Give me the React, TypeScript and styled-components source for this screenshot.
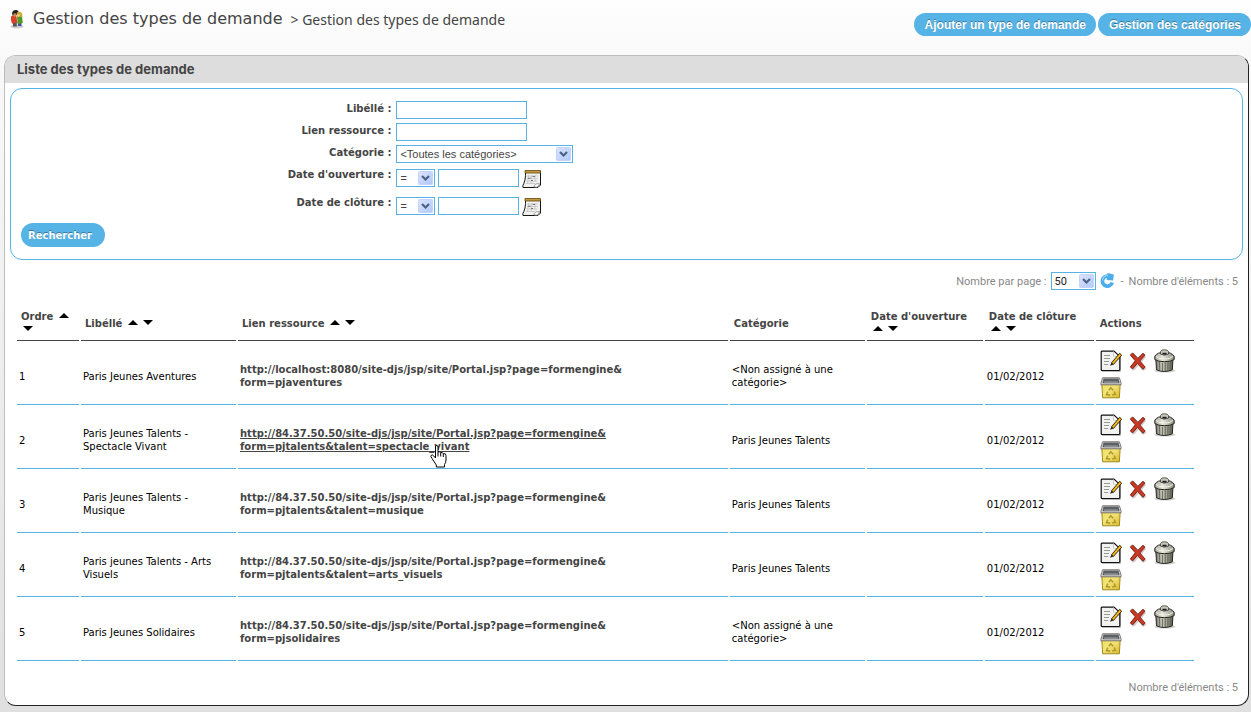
import React from 'react';
import styled, { createGlobalStyle } from 'styled-components';

const BLUE = '#56b3e6';
const INK = '#444';

const GlobalStyle = createGlobalStyle`
  *, *::before, *::after { box-sizing: border-box; }
  body {
    margin: 0;
    min-height: 100vh;
    background: linear-gradient(#fefefe, #f9f9f9 60px, #f0f0f0 300px, #e0e0e0 700px) no-repeat #e0e0e0;
    font-family: "DejaVu Sans", Verdana, sans-serif;
    font-size: 10px;
    line-height: 13px;
    color: #000;
  }
`;

const Page = styled.div`
  padding-left: 4px;
`;

const TopBar = styled.header`
  display: flex;
  justify-content: space-between;
  height: 55px;
`;

const Breadcrumb = styled.div`
  display: flex;
  align-items: center;
  height: 38px;
  padding-left: 4px;
  color: ${INK};
`;

const Title = styled.h1`
  margin: 0 8px 0 7px;
  font-size: 16px;
  line-height: 20px;
  font-weight: 400;
`;

const Crumb = styled.span`
  padding-top: 2px;
  font-family: "Noto Sans", sans-serif;
  font-size: 14px;
  line-height: 20px;
`;

const TopActions = styled.nav`
  display: flex;
  gap: 2px;
  padding-top: 13px;
`;

const PillButton = styled.button`
  height: 23px;
  padding: 1px 10px 0 11px;
  border: 0;
  border-radius: 12px;
  background: ${BLUE};
  color: #fff;
  font: bold 12px/22px "Liberation Sans", Arial, sans-serif;
  text-shadow: 0 -1px 0 rgba(0, 0, 0, 0.35);
  cursor: pointer;
`;

const SearchButton = styled(PillButton)`
  height: 24px;
  padding: 1px 13px 0 7px;
  font: bold 10px/23px "DejaVu Sans", Verdana, sans-serif;
`;

const Panel = styled.main`
  margin: 0 2px 5px 0;
  border: 1px solid;
  border-color: #bdbdbd #222 #222 #bdbdbd;
  border-radius: 12px;
  background: #fff;
  overflow: hidden;
`;

const PanelTitle = styled.h2`
  margin: 0;
  padding-left: 12px;
  background: #ddd;
  color: ${INK};
  font: bold 13px/27px Inter, "Liberation Sans", sans-serif;
`;

const SearchForm = styled.form`
  margin: 5px;
  padding: 12px 10px;
  border: 1px solid ${BLUE};
  border-radius: 12px;
`;

const Field = styled.div<{ $tall?: boolean }>`
  display: grid;
  grid-template-columns: 31% 1fr;
  height: ${(p) => (p.$tall ? 28 : 22)}px;
`;

const FieldLabel = styled.label`
  padding: 1px 5px 0 0;
  text-align: right;
  font-weight: bold;
  line-height: 14px;
  color: ${INK};
`;

const Controls = styled.div<{ $lowered?: boolean }>`
  display: flex;
  align-items: flex-start;
  gap: 3px;
  padding-top: ${(p) => (p.$lowered ? 2 : 0)}px;
`;

const TextInput = styled.input<{ $width: number }>`
  width: ${(p) => p.$width}px;
  height: 18px;
  padding: 0 4px;
  border: 1px solid ${BLUE};
  background: #fff;
  font: 11px "Liberation Sans", Arial, sans-serif;
`;

const SelectBox = styled.span<{ $width: number }>`
  position: relative;
  display: inline-block;
  width: ${(p) => p.$width}px;
  height: 18px;

  select {
    width: 100%;
    height: 18px;
    padding: 0 18px 0 3px;
    border: 1px solid ${BLUE};
    border-radius: 0;
    background: #fff;
    appearance: none;
    font: 11px "Liberation Sans", Arial, sans-serif;
    color: ${INK};
  }

  svg {
    position: absolute;
    top: 2px;
    right: 2px;
    pointer-events: none;
  }
`;

const IconButton = styled.button`
  display: inline-flex;
  align-items: center;
  justify-content: center;
  padding: 0;
  border: 0;
  background: none;
  cursor: pointer;
`;

const Pager = styled.div`
  display: flex;
  justify-content: flex-end;
  align-items: center;
  gap: 4px;
  margin: 12px 10px;
  height: 18px;
  font: 11px/18px Roboto, Tahoma, sans-serif;
  color: #888;

  select {
    font-family: Roboto, Tahoma, sans-serif;
    color: #222;
  }
`;

const PagerText = styled.span`
  padding-top: 1px;
`;

const Separator = styled(PagerText)`
  margin: 0 1px 0 2px;
`;

const Footer = styled.p`
  margin: 18px 10px 10px;
  text-align: right;
  font: 11px/14px Roboto, Tahoma, sans-serif;
  color: #888;
`;

const Table = styled.table`
  width: 95%;
  margin-left: 10px;
  table-layout: fixed;
  border-spacing: 2px;
`;

const HeadCell = styled.th`
  height: 37px;
  padding: 2px 4px 0;
  border-bottom: 1px solid ${INK};
  text-align: left;
  vertical-align: middle;
  color: ${INK};
`;

const Cell = styled.td`
  height: 62px;
  padding: 5px 2px 0;
  border-bottom: 1px solid ${BLUE};
  vertical-align: middle;
`;

const ActionsCell = styled(Cell)`
  padding: 2px 0 0 4px;
`;

const Wrapped = styled.div`
  max-width: 136px;
`;

const SortArrow = styled.a`
  display: inline-block;
  width: 15px;
  height: 12px;
  vertical-align: top;

  svg { display: block; }
`;

const LinkHolder = styled.div`
  position: relative;
  max-width: 450px;

  > svg {
    position: absolute;
    left: 190px;
    top: 18px;
  }
`;

const ResourceLink = styled.a<{ $hovered: boolean }>`
  font-weight: bold;
  color: ${INK};
  text-decoration: ${(p) => (p.$hovered ? 'underline' : 'none')};
`;

const Actions = styled.div`
  display: flex;
  flex-wrap: wrap;
  gap: 5px;

  button { width: 22px; height: 22px; }
  svg { overflow: visible; }
`;

const PeopleIcon = () => (
  <svg width="18" height="20" viewBox="0 0 18 20" aria-hidden="true">
    <ellipse cx="9" cy="17.5" rx="6.5" ry="1.7" fill="#ccc" />
    <path d="M4.5 11.500h4.300v6H5.200z" fill="#55565e" />
    <path d="M9.500 12h4v5h-3.400z" fill="#3c53a0" />
    <path d="M3 7.500q3-2 5.600 0l.6 6.600-5.200.4q-1.600-3-1-7z" fill="#d9432a" />
    <path d="M9 7.500q3-1.500 5 .4l.9 6-5.200 1z" fill="#4f9c23" />
    <path d="M4 4q1-3.500 4.500-3L10.500 2 9 6 4.500 6.500z" fill="#26241f" />
    <path d="M5.500 4.500h3V7l-1.600.8L5.400 7z" fill="#c98c5f" />
    <path d="M9 3.400q3-1.800 5 .9l.5 4.300-1.900-1-3 .2z" fill="#ccab2a" />
    <path d="M9.500 5h2.600v2.200l-1.300.8-1.200-.8z" fill="#efc27b" />
  </svg>
);

const DropArrow = () => (
  <svg width="15" height="14" viewBox="0 0 15 14" aria-hidden="true">
    <defs>
      <linearGradient id="drop" x1="0" y1="0" x2="1" y2="1">
        <stop offset="0" stopColor="#dbe5fe" />
        <stop offset="1" stopColor="#b0c8fa" />
      </linearGradient>
    </defs>
    <rect x=".5" y=".5" width="14" height="13" rx="1" fill="url(#drop)" stroke="#c3d3fb" />
    <path d="M4 5l3.500 3.500L11 5" fill="none" stroke="#4d6185" strokeWidth="2.200" />
  </svg>
);

const CalendarIcon = () => (
  <svg width="20" height="20" viewBox="0 0 20 20" aria-hidden="true">
    <path d="M3.500 2.500h15v13.500l-2.500 2.500H1q-.8-1.500.8-4 1.500-3 1.700-8z" fill="#f1f1ed" stroke="#151515" />
    <path d="M3 1.500h15.500V4H3z" fill="#c39a3b" stroke="#5f4512" strokeWidth=".8" />
    <path d="M5 7h11M5 9.500h11M4.500 12h11M4 14.500h9M6.500 6l-1 9M9.500 6l-.5 9M13 6v7" stroke="#c4c4c4" strokeWidth=".8" />
    <path d="M6 9.200h2.500M10.500 7.500h2.500M9 11.500h2" stroke="#6d7780" strokeWidth="1.100" />
    <path d="M12 18q.2-4 5.800-3.200l-2.600 3.400z" fill="#fff" stroke="#777" strokeWidth=".7" />
  </svg>
);

const RefreshIcon = () => (
  <svg width="15" height="16" viewBox="0 0 15 16" aria-hidden="true">
    <path d="M12.200 9.500A5 5 0 1 1 8.500 3.200" fill="none" stroke="#4cadea" strokeWidth="3.800" />
    <path d="M7.500 0l6.300 1.400-.6 6.100-6.600-.6z" fill="#4cadea" />
    <path d="M2.500 7.500A5 5 0 0 1 8 2.500" fill="none" stroke="#93d3f7" strokeWidth="1.200" />
  </svg>
);

const EditIcon = () => (
  <svg width="22" height="22" viewBox="0 0 22 22" aria-hidden="true">
    <path d="M2 21.500h18.500V6" fill="none" stroke="#b8b8b8" />
    <path d="M2 1.200h12l5.800 5.300v13q0 1-1 1H2.200q-1 0-1-1V2.200q0-1 .8-1z" fill="#f2f2f0" stroke="#111" strokeWidth="1.200" />
    <path d="M13.500 1.500v4.500l5.500.8z" fill="#fff" stroke="#aaa" strokeWidth=".6" />
    <path d="M4 5.500h6M4 8.500h6M4 11.500h5M4 14.500h4" stroke="#999" />
    <path d="M11.500 12.800L19.700 3.300l2 1.800-8.200 9.300z" fill="#f2b81f" stroke="#211805" strokeWidth=".9" />
    <path d="M9.800 15.800l1.700-3 2 1.700z" fill="#222" />
  </svg>
);

const DeleteIcon = () => (
  <svg width="22" height="22" viewBox="0 0 22 22" aria-hidden="true">
    <path d="M5 6.500l3-2 4 4.800L16.500 5l2.500 2-4.600 5.600 5 6-3 2.400-4.600-5.700-5 5.500-2.200-2 5-6z" fill="#999" opacity=".5" />
    <path d="M3.300 4.900L5.800 3l5 5.400L16 3.300l2 1.900-5.200 5.700 5.300 6.200-2.300 2.200-5.400-6-4.800 5.600-2.300-1.900 5-6.200z" fill="#c93a22" stroke="#80231a" />
  </svg>
);

const TrashIcon = () => (
  <svg width="22" height="24" viewBox="0 0 22 24" aria-hidden="true">
    <defs>
      <linearGradient id="trash" x1="0" x2="1">
        <stop offset="0" stopColor="#77766a" />
        <stop offset=".35" stopColor="#d5d4c6" />
        <stop offset="1" stopColor="#5d5c52" />
      </linearGradient>
      <linearGradient id="lid" x1="0" x2="1">
        <stop offset="0" stopColor="#a5a497" />
        <stop offset=".4" stopColor="#e9e8de" />
        <stop offset="1" stopColor="#8e8d80" />
      </linearGradient>
    </defs>
    <ellipse cx="11" cy="21.800" rx="10.500" ry="1.800" fill="#d0d0d0" />
    <path d="M1.800 10h17.200l-.7 10.800q-7.900 3.400-15.800 0z" fill="url(#trash)" stroke="#24241f" />
    <path d="M5.500 13l.3 8M8.300 13.500l.2 8.500M11.200 13.500v8.500M14 13.500l-.2 8.500M16.500 13l-.4 8" stroke="#6a695e" strokeWidth="1.100" />
    <path d="M.8 7.200Q3.500 3.200 10.500 3.200t9.700 4v3.300q-3 2.200-9.700 2.200T.8 10.500z" fill="url(#lid)" stroke="#24241f" />
    <path d="M2 7.500q3 2.500 8.500 2.500T19 7.500" fill="none" stroke="#f4f3ec" strokeWidth=".9" />
    <path d="M6.500 5.200V2.500Q7.500.7 10.500.7t4 1.800v2.700q-4 2-8 0z" fill="#c6c5b9" stroke="#4a4a42" strokeWidth=".9" />
    <path d="M8.500 3.800h4v1.800h-4z" fill="#1c1c18" />
  </svg>
);

const RecycleIcon = () => (
  <svg width="22" height="22" viewBox="0 0 22 22" aria-hidden="true">
    <defs>
      <linearGradient id="bin" x1="0" y1="0" x2="1" y2="1">
        <stop offset="0" stopColor="#efdc55" />
        <stop offset=".4" stopColor="#f4e67c" />
        <stop offset="1" stopColor="#d9b92b" />
      </linearGradient>
    </defs>
    <path d="M1.800 7h18.400l-.9 13.800H2.700z" fill="url(#bin)" stroke="#a08a1c" />
    <path d="M2.600.8h16.800l1.700 5.400v1.600H.9V6.200z" fill="#e2e2e2" stroke="#666" strokeWidth=".9" />
    <path d="M3.500 1.600h15l1.200 4.600H2.300z" fill="#5c6063" />
    <path d="M4.500 4.200h13l.8 2H3.700z" fill="#8a8e90" />
    <g fill="none" stroke="#b09a2b" strokeWidth="1.500">
      <path d="M8.800 13.300l2-2.600 2.400 2.500" />
      <path d="M14.200 14.500l1.200 2.800-3.200.8" />
      <path d="M10 18.200l-3.500-.6 1.200-3" />
    </g>
  </svg>
);

const HandCursor = () => (
  <svg width="17" height="23" viewBox="0 0 17 23" aria-hidden="true">
    <path
      d="M5.500 13V2q0-1.500 1.250-1.500T8 2v5q1.500-.8 2.700.6 1.600-.5 2.600.9 2.700-.3 2.700 2v4.500q0 2.500-1.500 4.500v2.500H6.300v-2L2 13.500q-1.800-2.200-.8-3.200 1.300-1 2.500.6z"
      fill="#fff" stroke="#000" strokeWidth="1"
    />
    <path d="M8 7v4.500M10.700 8v3.500M13.300 9v3" stroke="#000" strokeWidth="1" />
  </svg>
);

const Sort = ({ column }: { column: string }) => (
  <>
    <SortArrow href="#asc" aria-label={`Trier par ${column}, croissant`}>
      <svg width="15" height="12" viewBox="0 0 15 12"><path d="M2 8L7 3l5 5z" fill="#000" /></svg>
    </SortArrow>
    <SortArrow href="#desc" aria-label={`Trier par ${column}, décroissant`}>
      <svg width="15" height="12" viewBox="0 0 15 12"><path d="M2 3h10L7 8z" fill="#000" /></svg>
    </SortArrow>
  </>
);

const columns = [
  { label: 'Ordre', width: 62, sortable: true },
  { label: 'Libéllé', width: 155, sortable: true },
  { label: 'Lien ressource', sortable: true },
  { label: 'Catégorie', width: 135 },
  { label: "Date d'ouverture", width: 116, sortable: true },
  { label: 'Date de clôture', width: 109, sortable: true },
  { label: 'Actions', width: 98 },
];

const PORTAL = '/site-djs/jsp/site/Portal.jsp?page=formengine&';

const rows = [
  { name: 'Paris Jeunes Aventures', host: 'http://localhost:8080', query: 'form=pjaventures', category: '<Non assigné à une catégorie>' },
  { name: 'Paris Jeunes Talents - Spectacle Vivant', host: 'http://84.37.50.50', query: 'form=pjtalents&talent=spectacle_vivant', category: 'Paris Jeunes Talents', hovered: true },
  { name: 'Paris Jeunes Talents - Musique', host: 'http://84.37.50.50', query: 'form=pjtalents&talent=musique', category: 'Paris Jeunes Talents' },
  { name: 'Paris jeunes Talents - Arts Visuels', host: 'http://84.37.50.50', query: 'form=pjtalents&talent=arts_visuels', category: 'Paris Jeunes Talents' },
  { name: 'Paris Jeunes Solidaires', host: 'http://84.37.50.50', query: 'form=pjsolidaires', category: '<Non assigné à une catégorie>' },
];

const DateField = ({ id, label }: { id: string; label: string }) => (
  <Field $tall>
    <FieldLabel htmlFor={id}>{label}</FieldLabel>
    <Controls $lowered>
      <SelectBox $width={39}>
        <select aria-label={`Comparateur ${label}`}><option>=</option></select>
        <DropArrow />
      </SelectBox>
      <TextInput id={id} type="text" $width={81} />
      <IconButton type="button" aria-label="Choisir une date"><CalendarIcon /></IconButton>
    </Controls>
  </Field>
);

export default function App() {
  return (
    <Page>
      <GlobalStyle />
      <TopBar>
        <Breadcrumb>
          <PeopleIcon />
          <Title>Gestion des types de demande</Title>
          <Crumb>&gt; Gestion des types de demande</Crumb>
        </Breadcrumb>
        <TopActions>
          <PillButton type="button">Ajouter un type de demande</PillButton>
          <PillButton type="button">Gestion des catégories</PillButton>
        </TopActions>
      </TopBar>

      <Panel>
        <PanelTitle>Liste des types de demande</PanelTitle>

        <SearchForm onSubmit={(e) => e.preventDefault()}>
          <Field>
            <FieldLabel htmlFor="libelle">Libéllé :</FieldLabel>
            <Controls><TextInput id="libelle" type="text" $width={131} /></Controls>
          </Field>
          <Field>
            <FieldLabel htmlFor="lien">Lien ressource :</FieldLabel>
            <Controls><TextInput id="lien" type="text" $width={131} /></Controls>
          </Field>
          <Field>
            <FieldLabel htmlFor="categorie">Catégorie :</FieldLabel>
            <Controls>
              <SelectBox $width={177}>
                <select id="categorie"><option>&lt;Toutes les catégories&gt;</option></select>
                <DropArrow />
              </SelectBox>
            </Controls>
          </Field>
          <DateField id="ouverture" label="Date d'ouverture :" />
          <DateField id="cloture" label="Date de clôture :" />
          <SearchButton type="submit">Rechercher</SearchButton>
        </SearchForm>

        <Pager>
          <PagerText as="label" htmlFor="parpage">Nombre par page :</PagerText>
          <SelectBox $width={45}>
            <select id="parpage"><option>50</option></select>
            <DropArrow />
          </SelectBox>
          <IconButton type="button" aria-label="Actualiser"><RefreshIcon /></IconButton>
          <Separator>-</Separator>
          <PagerText>Nombre d'éléments : 5</PagerText>
        </Pager>

        <Table>
          <colgroup>
            {columns.map((c) => <col key={c.label} width={c.width} />)}
          </colgroup>
          <thead>
            <tr>
              {columns.map((c) => (
                <HeadCell key={c.label} scope="col">
                  {c.label} {c.sortable && <Sort column={c.label} />}
                </HeadCell>
              ))}
            </tr>
          </thead>
          <tbody>
            {rows.map((r, i) => (
              <tr key={r.name}>
                <Cell>{i + 1}</Cell>
                <Cell><Wrapped>{r.name}</Wrapped></Cell>
                <Cell>
                  <LinkHolder>
                    <ResourceLink href={`${r.host}${PORTAL}${r.query}`} $hovered={!!r.hovered}>
                      {r.host}{PORTAL}<wbr />{r.query}
                    </ResourceLink>
                    {r.hovered && <HandCursor />}
                  </LinkHolder>
                </Cell>
                <Cell><Wrapped>{r.category}</Wrapped></Cell>
                <Cell />
                <Cell>01/02/2012</Cell>
                <ActionsCell>
                  <Actions>
                    <IconButton type="button" aria-label="Modifier"><EditIcon /></IconButton>
                    <IconButton type="button" aria-label="Désactiver"><DeleteIcon /></IconButton>
                    <IconButton type="button" aria-label="Supprimer"><TrashIcon /></IconButton>
                    <IconButton type="button" aria-label="Archiver"><RecycleIcon /></IconButton>
                  </Actions>
                </ActionsCell>
              </tr>
            ))}
          </tbody>
        </Table>

        <Footer>Nombre d'éléments : 5</Footer>
      </Panel>
    </Page>
  );
}
